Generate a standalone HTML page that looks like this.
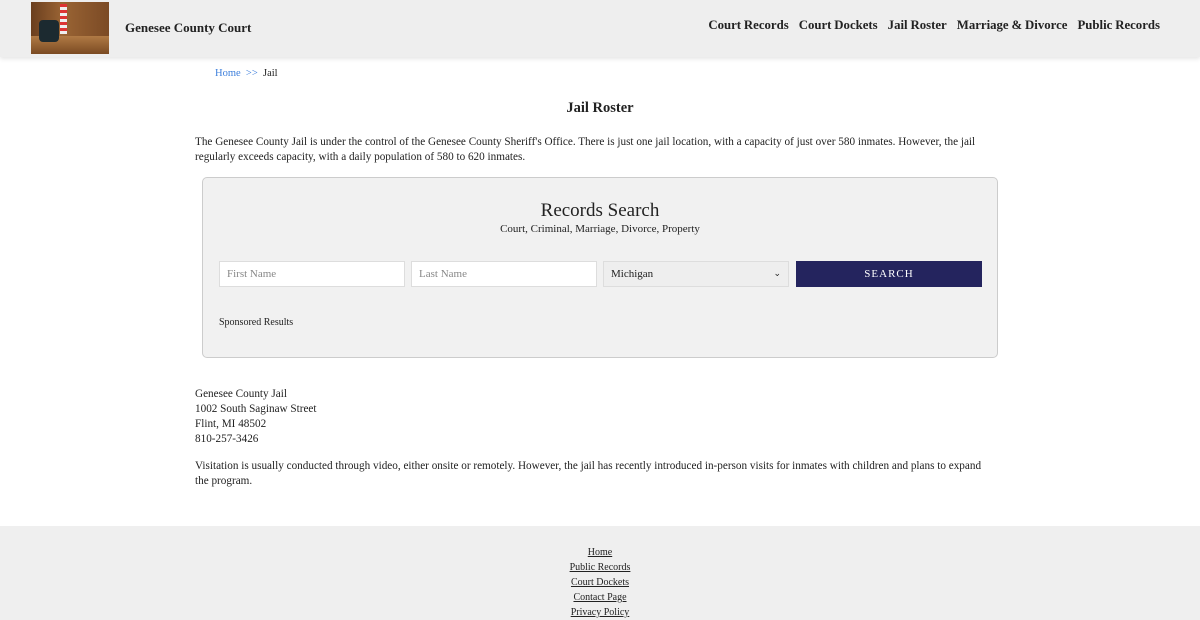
<!DOCTYPE html>
<html><head><style>
*{box-sizing:border-box;margin:0;padding:0}
body{width:1200px;height:620px;overflow:hidden;font-family:"Liberation Serif",serif;color:#222;background:#fff;font-size:11px}
.hdr{height:57px;background:#eee;position:relative;box-shadow:0 2px 4px rgba(0,0,0,.1)}
.logo{position:absolute;left:31px;top:2px;width:78px;height:52px;background:linear-gradient(90deg,#6a3e1e,#9a6434 40%,#7b4a25);overflow:hidden}
.logo .chair{position:absolute;left:8px;top:18px;width:20px;height:22px;background:#1c2a30;border-radius:4px}
.logo .flag{position:absolute;left:29px;top:2px;width:7px;height:30px;background:repeating-linear-gradient(#d33 0 3px,#eee 3px 6px)}
.logo .desk{position:absolute;left:0;top:34px;width:78px;height:18px;background:linear-gradient(#b07a45,#7a4a22)}
.site{position:absolute;left:125px;top:20px;font-size:13px;font-weight:bold}
.nav{position:absolute;right:40px;top:18px;font-size:12.8px;font-weight:bold;word-spacing:-0.3px}
.nav span{margin-left:10px}
.bc{position:absolute;left:215px;top:68px;font-size:10.5px}
.bc a{color:#3d7fdc;text-decoration:none}
h1{position:absolute;top:100px;width:100%;text-align:center;font-size:14.5px}
.p{position:absolute;left:195px;width:810px;font-size:11.2px;line-height:15px}
.box{position:absolute;left:202px;top:177px;width:796px;height:181px;background:#f1f1f1;border:1px solid #ccc;border-radius:5px}
.box h2{position:absolute;top:22px;width:100%;text-align:center;font-weight:normal;font-size:19px}
.box .s{position:absolute;top:45px;width:100%;text-align:center;font-size:11px}
.in{position:absolute;top:83px;height:26px;width:186px;background:#fff;border:1px solid #ddd;font-size:11px;color:#888;padding:6px 7px}
.sel{background:#eee;color:#222}
.btn{position:absolute;top:83px;left:593px;width:186px;height:26px;background:#24245e;color:#fff;text-align:center;font-size:11px;letter-spacing:1px;line-height:27px}
.sp{position:absolute;left:16px;top:139px;font-size:10px}
.ft{position:absolute;top:526px;left:0;width:1200px;height:94px;background:#efefef;text-align:center;font-size:10px}
.ft div{line-height:15px;text-decoration:underline}
</style></head><body>
<div class="hdr"><div class="logo"><div class="desk"></div><div class="chair"></div><div class="flag"></div></div>
<div class="site">Genesee County Court</div>
<div class="nav"><span>Court Records</span><span>Court Dockets</span><span>Jail Roster</span><span>Marriage &amp; Divorce</span><span>Public Records</span></div></div>
<div class="bc"><a>Home</a> <a>&nbsp;&gt;&gt;</a>&nbsp; Jail</div>
<h1>Jail Roster</h1>
<div class="p" style="top:135px">The Genesee County Jail is under the control of the Genesee County Sheriff's Office. There is just one jail location, with a capacity of just over 580 inmates. However, the jail regularly exceeds capacity, with a daily population of 580 to 620 inmates.</div>
<div class="box"><h2>Records Search</h2><div class="s">Court, Criminal, Marriage, Divorce, Property</div>
<div class="in" style="left:16px">First Name</div>
<div class="in" style="left:208px">Last Name</div>
<div class="in sel" style="left:400px">Michigan<span style="float:right;font-size:9px">&#8964;</span></div>
<div class="btn">SEARCH</div>
<div class="sp">Sponsored Results</div></div>
<div class="p" style="top:387px">Genesee County Jail<br>1002 South Saginaw Street<br>Flint, MI 48502<br>810-257-3426</div>
<div class="p" style="top:459px;width:840px">Visitation is usually conducted through video, either onsite or remotely. However, the jail has recently introduced in-person visits for inmates with children and plans to expand<br>the program.</div>
<div class="ft"><div style="margin-top:19px">Home</div><div>Public Records</div><div>Court Dockets</div><div>Contact Page</div><div>Privacy Policy</div></div>
</body></html>
